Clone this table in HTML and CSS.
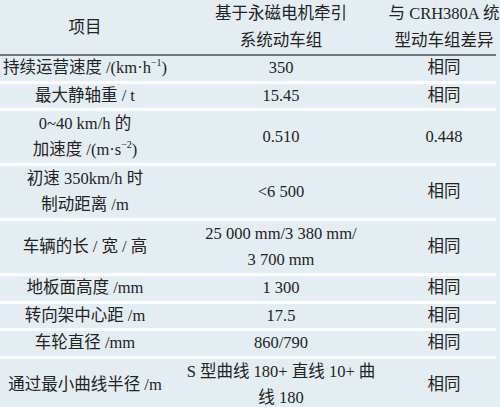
FILE: index.html
```html
<!DOCTYPE html>
<html>
<head>
<meta charset="utf-8">
<title>参数对比</title>
<link rel="stylesheet" href="styles.css">
</head>
<body>
<table class="spec">
  <colgroup>
    <col class="c-item">
    <col class="c-val">
    <col class="c-diff">
  </colgroup>
  <thead>
    <tr class="head">
      <th>项目</th>
      <th>基于永磁电机牵引<br>系统动车组</th>
      <th><div class="wide"><span>与 CRH380A 统</span><span>型动车组差异</span></div></th>
    </tr>
  </thead>
  <tbody>
    <tr class="one">
      <td>持续运营速度 /(km·h<sup>−1</sup>)</td>
      <td>350</td>
      <td>相同</td>
    </tr>
    <tr class="one">
      <td>最大静轴重 / t</td>
      <td>15.45</td>
      <td>相同</td>
    </tr>
    <tr class="two">
      <td>0~40 km/h 的<br>加速度 /(m·s<sup>−2</sup>)</td>
      <td>0.510</td>
      <td>0.448</td>
    </tr>
    <tr class="two">
      <td>初速 350km/h 时<br>制动距离 /m</td>
      <td>&lt;6 500</td>
      <td>相同</td>
    </tr>
    <tr class="two">
      <td>车辆的长 / 宽 / 高</td>
      <td>25 000 mm/3 380 mm/<br>3 700 mm</td>
      <td>相同</td>
    </tr>
    <tr class="one">
      <td>地板面高度 /mm</td>
      <td>1 300</td>
      <td>相同</td>
    </tr>
    <tr class="one">
      <td>转向架中心距 /m</td>
      <td>17.5</td>
      <td>相同</td>
    </tr>
    <tr class="one">
      <td>车轮直径 /mm</td>
      <td>860/790</td>
      <td>相同</td>
    </tr>
    <tr class="two">
      <td>通过最小曲线半径 /m</td>
      <td>S 型曲线 180+ 直线 10+ 曲<br>线 180</td>
      <td>相同</td>
    </tr>
  </tbody>
</table>
</body>
</html>
```
FILE: styles.css
```css
html, body {
  margin: 0;
  padding: 0;
  overflow: hidden;
  background: #e3edf2;
}

.spec {
  border-collapse: collapse;
  table-layout: fixed;
  width: 496px;
  background: #e3edf2;
  color: #232323;
  font-family: "Liberation Serif", "Noto Sans CJK SC", serif;
  font-size: 16.5px;
}

.c-item { width: 170px; }
.c-val { width: 222px; }
.c-diff { width: 104px; }

.spec th,
.spec td {
  padding: 0;
  text-align: center;
  vertical-align: middle;
  white-space: nowrap;
  font-weight: normal;
  font-family: "Liberation Serif", "Noto Sans CJK SC", serif;
}

.head th {
  height: 51px;
  line-height: 27px;
  border-bottom: 2px solid #6e787e;
}

.wide {
  display: flex;
  flex-direction: column;
  align-items: center;
}

.spec tbody tr + tr td {
  border-top: 3px solid #ffffff;
}

.one td {
  line-height: 24.6px;
}

.two td {
  line-height: 26px;
}

sup {
  font-size: 10px;
  line-height: 0;
  vertical-align: 7px;
}
```
